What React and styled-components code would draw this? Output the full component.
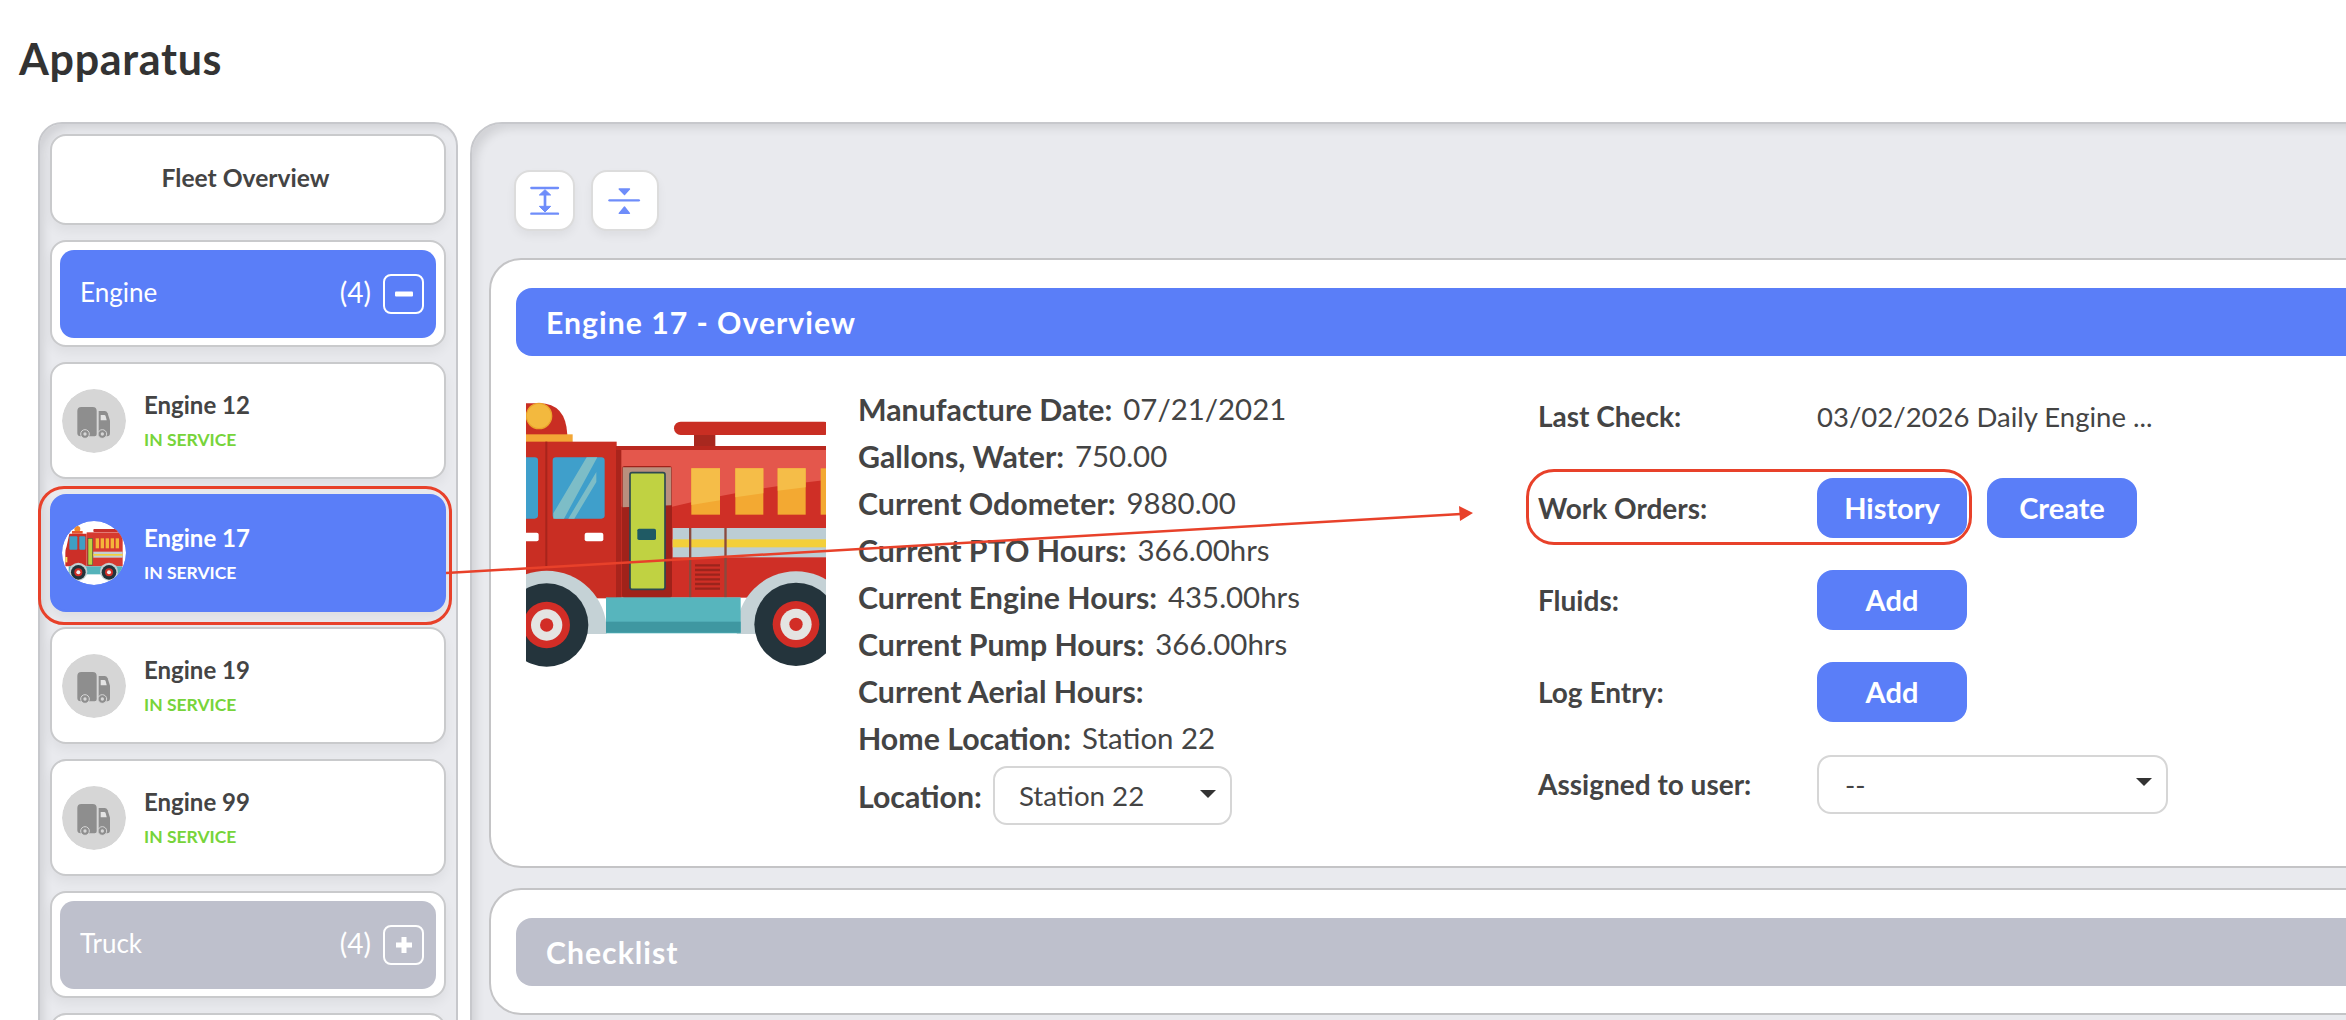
import styled, { createGlobalStyle } from "styled-components";

const BLUE = "#5a7ef8";
const MUTED = "#bec0cc";
const INK = "#444";
const RED = "#e8412a";

const GlobalStyle = createGlobalStyle`
  html, body {
    margin: 0;
    width: 2346px;
    height: 1020px;
    overflow: hidden;
    background: #fff;
  }
  * {
    box-sizing: border-box;
  }
`;

const vehicles = [
  { id: 12 },
  { id: 17, active: true },
  { id: 19 },
  { id: 99 },
];

const specs = [
  ["Manufacture Date:", "07/21/2021"],
  ["Gallons, Water:", "750.00"],
  ["Current Odometer:", "9880.00"],
  ["Current PTO Hours:", "366.00hrs"],
  ["Current Engine Hours:", "435.00hrs"],
  ["Current Pump Hours:", "366.00hrs"],
  ["Current Aerial Hours:", ""],
  ["Home Location:", "Station 22"],
];

const GreyTruck = () => (
  <svg viewBox="6 6 192 192" width="64" height="64">
    <circle cx="102" cy="102" r="96" fill="#d6d6d6" />
    <path d="M64 60h34q12 0 12 12v70q0 6-6 6H62q-10 0-10-10V72q0-12 12-12z" fill="#8e8e8e" />
    <path d="M116 72h18q6 0 9 7l7 22v37q0 10-8 10h-26z" fill="#8e8e8e" />
    <path d="M122 84h11q3 0 4 4l3 12h-18z" fill="#e4e4e4" />
    <circle cx="75" cy="141" r="13" fill="#8e8e8e" stroke="#d6d6d6" strokeWidth="3" />
    <circle cx="75" cy="141" r="5" fill="#d6d6d6" />
    <circle cx="127" cy="141" r="13" fill="#8e8e8e" stroke="#d6d6d6" strokeWidth="3" />
    <circle cx="127" cy="141" r="5" fill="#d6d6d6" />
  </svg>
);

const SmallEngine = () => (
  <svg viewBox="36 42 192 192" width="64" height="64">
    <circle cx="132" cy="138" r="96" fill="#fff" />
    <circle cx="82" cy="66" r="9" fill="#f08a2c" />
    <rect x="66" y="72" width="32" height="8" fill="#e8552c" />
    <rect x="130" y="66" width="80" height="9" rx="3" fill="#c9302a" />
    <path d="M58 80h52v98H46v-40q0-10 4-20z" fill="#cc2f28" />
    <rect x="110" y="76" width="108" height="102" fill="#d63a30" />
    <rect x="58" y="88" width="24" height="40" rx="3" fill="#3f9fc4" />
    <rect x="88" y="88" width="18" height="40" rx="3" fill="#3f9fc4" />
    <rect x="114" y="94" width="14" height="80" fill="#c0d242" stroke="#244" strokeWidth="1.5" />
    <rect x="137" y="94" width="10" height="30" fill="#f4b53a" />
    <rect x="152" y="94" width="10" height="30" fill="#f4b53a" />
    <rect x="167" y="94" width="10" height="30" fill="#f4b53a" />
    <rect x="182" y="94" width="10" height="30" fill="#f4b53a" />
    <rect x="197" y="94" width="10" height="30" fill="#f4b53a" />
    <rect x="130" y="134" width="88" height="18" fill="#c3d0d2" />
    <rect x="130" y="141" width="88" height="5" fill="#f3d03d" />
    <rect x="46" y="150" width="6" height="16" fill="#f6e36a" />
    <rect x="56" y="178" width="160" height="24" fill="#55b3ba" />
    <circle cx="85" cy="194" r="27" fill="#c3d0d2" />
    <circle cx="177" cy="194" r="27" fill="#c3d0d2" />
    <circle cx="85" cy="196" r="22" fill="#22333a" />
    <circle cx="85" cy="196" r="12" fill="#d22d26" />
    <circle cx="85" cy="196" r="6" fill="#eee" />
    <circle cx="177" cy="196" r="22" fill="#22333a" />
    <circle cx="177" cy="196" r="12" fill="#d22d26" />
    <circle cx="177" cy="196" r="6" fill="#eee" />
  </svg>
);

const Wheel = ({ cx, cy }) => (
  <>
    <circle cx={cx} cy={cy} r="125" fill="#24343c" />
    <circle cx={cx} cy={cy} r="70" fill="#d22d26" />
    <circle cx={cx} cy={cy} r="47" fill="#e4e4e2" />
    <circle cx={cx} cy={cy} r="20" fill="#d22d26" />
  </>
);

// drawn in the same coordinates as the crop of the picture, cut off left and right
const EnginePhoto = () => (
  <svg viewBox="78 18 900 852" width="300" height="284">
    <rect x="78" y="18" width="900" height="852" fill="#fff" />
    <path d="M78 165V70h40q80 0 84 95z" fill="#c92e23" />
    <circle cx="117" cy="108" r="38" fill="#f3b93e" stroke="#eba42c" strokeWidth="4" />
    <rect x="78" y="163" width="140" height="24" fill="#f3a736" />
    <rect x="522" y="125" width="470" height="40" rx="20" fill="#c92e23" />
    <rect x="582" y="165" width="64" height="36" fill="#a8281f" />
    <rect x="78" y="185" width="272" height="470" fill="#c92e23" />
    <rect x="136" y="185" width="6" height="380" fill="#a8241c" />
    <rect x="348" y="198" width="630" height="455" fill="#cf2f26" />
    <path d="M348 206h630v94q-230 24-462 80H348z" fill="#e4574c" />
    <rect x="348" y="198" width="630" height="12" fill="#b9281f" />
    <rect x="348" y="210" width="16" height="443" fill="#a9241c" />
    <rect x="70" y="232" width="44" height="184" rx="10" fill="#3f9fcb" />
    <rect x="158" y="232" width="156" height="184" rx="10" fill="#3f9fcb" />
    <path d="M160 400l100-168h32L192 416h-32zM205 416l84-140v30l-66 110z" fill="#7dbdc7" />
    <rect x="70" y="458" width="46" height="26" rx="6" fill="#fff" />
    <rect x="254" y="458" width="56" height="26" rx="6" fill="#fff" />
    <rect x="366" y="258" width="150" height="395" rx="8" fill="#a0221a" />
    <path d="M368 262h146v114l-146 6z" fill="#b98f7e" />
    <rect x="390" y="278" width="105" height="350" rx="6" fill="#c0d242" stroke="#2d4a50" strokeWidth="5" />
    <rect x="412" y="446" width="56" height="34" rx="5" fill="#1f5a64" />
    <rect x="574" y="265" width="86" height="139" fill="#f3a932" />
    <rect x="706" y="265" width="84" height="139" fill="#f3a932" />
    <rect x="833" y="265" width="84" height="139" fill="#f3a932" />
    <rect x="962" y="265" width="16" height="139" fill="#f3a932" />
    <path d="M574 265h86v96l-86 14z" fill="#f5bd48" />
    <path d="M706 265h84v75l-84 12z" fill="#f5bd48" />
    <path d="M833 265h84v57l-84 10z" fill="#f5bd48" />
    <rect x="518" y="444" width="460" height="88" fill="#bccdd4" />
    <rect x="518" y="478" width="460" height="24" fill="#f3cf3a" />
    <rect x="567" y="444" width="7" height="208" fill="#8a4a3e" />
    <rect x="673" y="444" width="7" height="208" fill="#8a4a3e" />
    <path d="M585 556h75M585 570h75M585 584h75M585 598h75M585 612h75M585 626h75" stroke="#9b241c" strokeWidth="7" />
    <circle cx="140" cy="752" r="180" fill="#c5d2d6" />
    <circle cx="888" cy="752" r="178" fill="#c5d2d6" />
    <rect x="318" y="652" width="404" height="108" fill="#57b5bd" />
    <rect x="318" y="725" width="404" height="33" fill="#3f97a1" />
    <rect x="78" y="762" width="900" height="108" fill="#fff" />
    <Wheel cx={140} cy={735} />
    <Wheel cx={888} cy={733} />
  </svg>
);

const ExpandIcon = () => (
  <svg viewBox="135 150 183 183" width="61" height="61">
    <path d="M187 204h80M187 281h80" stroke="#6f8dfa" strokeWidth="7" strokeLinecap="round" />
    <path d="M228 220v44" stroke="#6f8dfa" strokeWidth="8" />
    <path d="M228 209l17 16h-34zM228 276l17-17h-34z" fill="#6f8dfa" stroke="#6f8dfa" strokeWidth="3" strokeLinejoin="round" />
  </svg>
);

const CollapseIcon = () => (
  <svg viewBox="366 150 201 183" width="68" height="61">
    <path d="M420 241h88" stroke="#6f8dfa" strokeWidth="7" strokeLinecap="round" />
    <path d="M449 207h31l-15 17zM449 280h31l-15-19z" fill="#6f8dfa" stroke="#6f8dfa" strokeWidth="4" strokeLinejoin="round" />
  </svg>
);

const Page = styled.div`
  position: relative;
  width: 2346px;
  height: 1020px;
  overflow: hidden;
  font-family: "Lato", "Liberation Sans", sans-serif;
  color: ${INK};
`;

const TitleBar = styled.header`
  display: flex;
  align-items: center;
  height: 122px;
  padding: 0 0 6px 19px;
`;

const Title = styled.h1`
  margin: 0;
  font-size: 43px;
  font-weight: 700;
  letter-spacing: 0.7px;
  color: #333;
`;

const Columns = styled.div`
  display: flex;
  gap: 12px;
  padding-left: 38px;
  height: 898px;
`;

const Sidebar = styled.aside`
  flex: 0 0 420px;
  display: flex;
  flex-direction: column;
  gap: 15px;
  padding: 10px;
  height: 1000px;
  background: #e9eaee;
  border: 2px solid #c7c8cc;
  border-radius: 24px;
  box-shadow: inset 10px 10px 10px -6px rgba(0, 0, 0, 0.1);
`;

const Card = styled.div`
  flex: none;
  position: relative;
  background: #fff;
  border: 2px solid #c9cacc;
  border-radius: 16px;
  box-shadow: 0 6px 12px rgba(0, 0, 0, 0.05);
`;

const FleetButton = styled(Card)`
  display: flex;
  align-items: center;
  justify-content: center;
  height: 91px;
  padding: 0 5px 4px 0;
  font-size: 24.6px;
  font-weight: 700;
`;

const GroupCard = styled(Card)`
  height: 107px;
  padding: 8px;
`;

const GroupHead = styled.div`
  display: flex;
  align-items: center;
  height: 88px;
  padding: 0 12px 0 20px;
  border-radius: 14px;
  background: ${(p) => (p.$open ? BLUE : MUTED)};
  color: #fff;
  font-size: 26px;
`;

const GroupName = styled.span`
  flex: 1;
  margin-bottom: 4px;
`;

const GroupCount = styled.span`
  margin: 0 12px 4px 0;
  font-size: 28px;
`;

const ToggleBox = styled.span`
  display: flex;
  align-items: center;
  justify-content: center;
  width: 41px;
  height: 40px;
  border: 2px solid #fff;
  border-radius: 8px;
`;

const VehicleRow = styled(Card)`
  display: flex;
  align-items: center;
  gap: 18px;
  height: ${(p) => (p.$active ? "118px" : "117px")};
  padding-left: 10px;
  ${(p) =>
    p.$active &&
    `
    background: ${BLUE};
    border-color: ${BLUE};
    color: #fff;
  `}
`;

const Avatar = styled.span`
  flex: none;
  width: 64px;
  height: 64px;
  border-radius: 50%;
  overflow: hidden;
  svg {
    display: block;
  }
`;

const VehicleText = styled.div`
  display: flex;
  flex-direction: column;
  margin-top: 3px;
`;

const VehicleName = styled.span`
  font-size: 24px;
  font-weight: 700;
  line-height: 35px;
`;

const VehicleStatus = styled.span`
  font-size: 17.5px;
  font-weight: 700;
  line-height: 35px;
  color: ${(p) => (p.$active ? "#fff" : "#77d43a")};
`;

const SelectedHalo = styled.span`
  position: absolute;
  top: -10px;
  left: -14px;
  right: -8px;
  bottom: -15px;
  border: 3px solid ${RED};
  border-radius: 26px;
  z-index: 2;
`;

const Main = styled.main`
  flex: 0 0 1950px;
  height: 1000px;
  padding: 46px 0 0 17px;
  background: #e9eaee;
  border: 2px solid #c7c8cc;
  border-radius: 32px;
  box-shadow: inset 10px 10px 10px -6px rgba(0, 0, 0, 0.1);
`;

const Toolbar = styled.div`
  display: flex;
  gap: 16px;
  margin: 0 0 27px 25px;
`;

const ToolButton = styled.button`
  display: block;
  padding: 0;
  background: #fff;
  border: 2px solid #dcdcdc;
  border-radius: 16px;
  box-shadow: 0 5px 10px rgba(0, 0, 0, 0.05);
  overflow: hidden;
  svg {
    display: block;
    margin: -2px;
  }
`;

const Panel = styled.section`
  background: #fff;
  border: 2px solid #c4c4c6;
  border-radius: 32px;
  padding: 28px 0 0 25px;
  height: ${(p) => p.$height}px;
  margin-bottom: 20px;
`;

const PanelHead = styled.h2`
  display: flex;
  align-items: center;
  height: 68px;
  margin: 0;
  padding-left: 30px;
  border-radius: 16px 0 0 16px;
  background: ${(p) => (p.$open ? BLUE : MUTED)};
  color: #fff;
  font-size: 30.2px;
  font-weight: 700;
  letter-spacing: 1px;
`;

const PanelBody = styled.div`
  display: flex;
  padding: 30px 0 0 10px;
`;

const Photo = styled.div`
  flex: none;
  width: 300px;
  height: 284px;
  margin-right: 32px;
  svg {
    display: block;
  }
`;

const Specs = styled.div`
  flex: 0 0 680px;
  margin-top: -1px;
`;

const SpecRow = styled.div`
  display: flex;
  gap: 11px;
  height: 47px;
  align-items: center;
  font-size: 29.4px;
`;

const Label = styled.span`
  font-weight: 700;
`;

const SpecLabel = styled(Label)`
  font-size: 30.3px;
`;

const LocationRow = styled.div`
  display: flex;
  align-items: center;
  gap: 11px;
  margin-top: 5px;
`;

const SelectBox = styled.div`
  display: flex;
  align-items: center;
  justify-content: space-between;
  width: ${(p) => p.$width}px;
  height: 59px;
  padding: 0 14px 0 ${(p) => p.$inset}px;
  font-size: 27.7px;
  background: #fff;
  border: 2px solid #d6d6d6;
  border-radius: 14px;
`;

const Caret = styled.span`
  width: 0;
  height: 0;
  border-left: 8px solid transparent;
  border-right: 8px solid transparent;
  border-top: 8px solid #333;
  margin-top: -4px;
`;

const Actions = styled.div`
  display: flex;
  flex-direction: column;
  gap: 32px;
`;

const ActionRow = styled.div`
  position: relative;
  display: grid;
  grid-template-columns: 279px auto;
  align-items: center;
  height: 60px;
  font-size: 28px;
`;

const CheckValue = styled.span`
  font-size: 27.5px;
`;

const ActionControls = styled.div`
  display: flex;
  gap: 20px;
`;

const ActionButton = styled.button`
  width: 150px;
  height: 60px;
  padding: 0 0 2px;
  background: ${BLUE};
  border: 0;
  border-radius: 16px;
  color: #fff;
  font-family: inherit;
  font-size: 29px;
  font-weight: 700;
`;

const WorkOrderHalo = styled.span`
  position: absolute;
  top: -9px;
  left: -12px;
  width: 446px;
  height: 76px;
  border: 3px solid ${RED};
  border-radius: 28px;
  pointer-events: none;
`;

const Arrow = styled.svg`
  position: absolute;
  top: 0;
  left: 0;
  pointer-events: none;
  z-index: 3;
`;

const App = () => (
  <Page>
    <GlobalStyle />
    <TitleBar>
      <Title>Apparatus</Title>
    </TitleBar>
    <Columns>
      <Sidebar>
        <FleetButton>Fleet Overview</FleetButton>
        <GroupCard>
          <GroupHead $open>
            <GroupName>Engine</GroupName>
            <GroupCount>(4)</GroupCount>
            <ToggleBox>
              <svg width="18" height="6" viewBox="0 0 18 6">
                <rect width="18" height="5" y="0.5" rx="1" fill="#fff" />
              </svg>
            </ToggleBox>
          </GroupHead>
        </GroupCard>
        {vehicles.map((v) => (
          <VehicleRow key={v.id} $active={v.active}>
            {v.active && <SelectedHalo />}
            <Avatar>{v.active ? <SmallEngine /> : <GreyTruck />}</Avatar>
            <VehicleText>
              <VehicleName>Engine {v.id}</VehicleName>
              <VehicleStatus $active={v.active}>IN SERVICE</VehicleStatus>
            </VehicleText>
          </VehicleRow>
        ))}
        <GroupCard>
          <GroupHead>
            <GroupName>Truck</GroupName>
            <GroupCount>(4)</GroupCount>
            <ToggleBox>
              <svg width="18" height="18" viewBox="0 0 18 18">
                <path d="M6.5 1h5v5.5H17v5h-5.5V17h-5v-5.5H1v-5h5.5z" fill="#fff" />
              </svg>
            </ToggleBox>
          </GroupHead>
        </GroupCard>
        <GroupCard />
      </Sidebar>
      <Main>
        <Toolbar>
          <ToolButton aria-label="Expand all">
            <ExpandIcon />
          </ToolButton>
          <ToolButton aria-label="Collapse all">
            <CollapseIcon />
          </ToolButton>
        </Toolbar>
        <Panel $height={610}>
          <PanelHead $open>Engine 17 - Overview</PanelHead>
          <PanelBody>
            <Photo>
              <EnginePhoto />
            </Photo>
            <Specs>
              {specs.map(([label, value]) => (
                <SpecRow key={label}>
                  <SpecLabel>{label}</SpecLabel>
                  {value && <span>{value}</span>}
                </SpecRow>
              ))}
              <LocationRow>
                <SpecLabel>Location:</SpecLabel>
                <SelectBox $width={239} $inset={24}>
                  Station 22
                  <Caret />
                </SelectBox>
              </LocationRow>
            </Specs>
            <Actions>
              <ActionRow>
                <Label>Last Check:</Label>
                <CheckValue>03/02/2026 Daily Engine ...</CheckValue>
              </ActionRow>
              <ActionRow>
                <WorkOrderHalo />
                <Label>Work Orders:</Label>
                <ActionControls>
                  <ActionButton>History</ActionButton>
                  <ActionButton>Create</ActionButton>
                </ActionControls>
              </ActionRow>
              <ActionRow>
                <Label>Fluids:</Label>
                <ActionControls>
                  <ActionButton>Add</ActionButton>
                </ActionControls>
              </ActionRow>
              <ActionRow>
                <Label>Log Entry:</Label>
                <ActionControls>
                  <ActionButton>Add</ActionButton>
                </ActionControls>
              </ActionRow>
              <ActionRow>
                <Label>Assigned to user:</Label>
                <SelectBox $width={351} $inset={26}>
                  --
                  <Caret />
                </SelectBox>
              </ActionRow>
            </Actions>
          </PanelBody>
        </Panel>
        <Panel $height={127}>
          <PanelHead>Checklist</PanelHead>
        </Panel>
      </Main>
    </Columns>
    <Arrow width="2346" height="1020" viewBox="0 0 2346 1020">
      <path d="M446 573L1461 514" stroke={RED} strokeWidth="2.5" />
      <path d="M1473 513l-14-7 1 15z" fill={RED} />
    </Arrow>
  </Page>
);

export default App;
